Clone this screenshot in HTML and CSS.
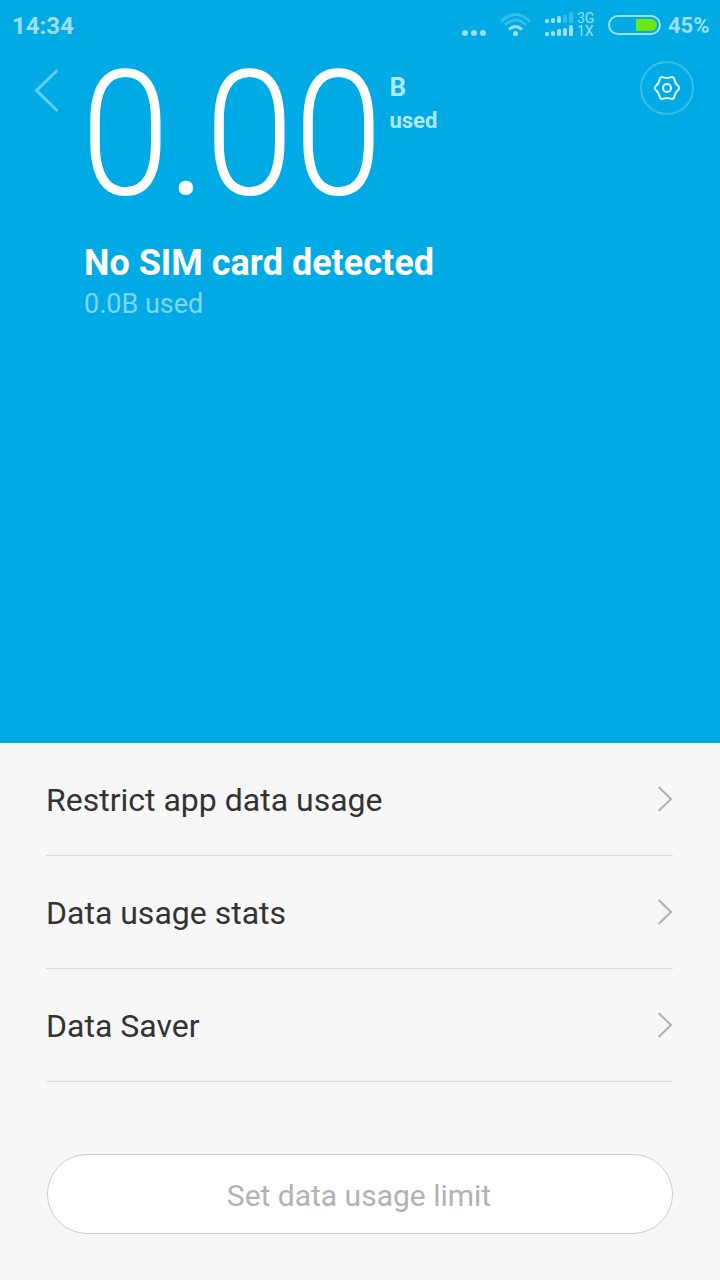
FILE: index.html
```html
<!DOCTYPE html>
<html lang="en">
<head>
<meta charset="utf-8">
<title>Data usage</title>
<link rel="stylesheet" href="styles.css">
</head>
<body>
<header class="hero">
  <div class="status">
    <span class="time">14:34</span>
    <svg class="status-icons" width="116" height="50" viewBox="461 0 116 50">
      <g fill="#9ddef5">
        <circle cx="465" cy="33" r="3"/><circle cx="474" cy="33" r="3"/><circle cx="483" cy="33" r="3"/>
        <circle cx="515.5" cy="33.5" r="2.5"/>
        <rect x="545" y="19" width="4" height="4" rx="1.5"/><rect x="551" y="18" width="4" height="5" rx="1.5"/><rect x="557" y="16" width="4" height="7" rx="1.5"/>
        <rect x="545" y="32" width="4" height="4" rx="1.5"/><rect x="551" y="31" width="4" height="5" rx="1.5"/><rect x="557" y="29" width="4" height="7" rx="1.5"/><rect x="563" y="28" width="4" height="8" rx="1.5"/><rect x="569" y="25" width="4" height="11" rx="1.5"/>
      </g>
      <g fill="#38bdea"><rect x="563" y="15" width="4" height="8" rx="1.5"/><rect x="569" y="12" width="4" height="11" rx="1.5"/></g>
      <g fill="none" stroke-width="3">
        <path d="M501 21.5Q515.500 7.500 530 21.500" stroke="#38bdea"/>
        <path d="M505 25Q515.500 15 526 25" stroke="#38bdea"/>
        <path d="M509 29.500Q515.500 23.500 522 29.500" stroke="#9ddef5"/>
      </g>
    </svg>
    <span class="net"><span>3G</span><span>1X</span></span>
    <span class="battery"><span class="charge"></span></span>
    <span class="percent">45%</span>
  </div>
  <div class="top">
    <svg class="back" width="26" height="44" viewBox="34 69 26 44"><path d="M56.500 71L36.500 90.500L56.500 110" fill="none" stroke="#66cdf0" stroke-width="3" stroke-linecap="round"/></svg>
    <div class="amount"><span class="digit">0</span><span class="dot">.</span><span class="digit">0</span><span class="digit">0</span></div>
    <div class="unit"><span class="unit-name">B</span><span class="unit-used">used</span></div>
    <div class="settings">
      <svg width="30" height="30" viewBox="-15 -15 30 30" fill="none" stroke="#e3f6fd" stroke-width="2"><path d="M10.880-2.330Q13.700 0 10.880 2.330Q8.050 4.650 7.450 8.260Q6.850 11.860 3.430 10.580Q0 9.300-3.430 10.580Q-6.850 11.860-7.450 8.260Q-8.050 4.650-10.880 2.330Q-13.700 0-10.880-2.330Q-8.050-4.650-7.450-8.260Q-6.850-11.860-3.430-10.580Q0-9.300 3.430-10.580Q6.850-11.860 7.450-8.260Q8.050-4.650 10.880-2.330Z"/><circle r="4"/></svg>
    </div>
  </div>
  <h1 class="title">No SIM card detected</h1>
  <p class="subtitle">0.0B used</p>
</header>
<main class="content">
  <div class="row"><span>Restrict app data usage</span><svg width="16" height="26" viewBox="0 0 16 26"><path d="M1.500 1L14 13L1.500 25" fill="none" stroke="#b0b0b0" stroke-width="2"/></svg></div>
  <div class="row"><span>Data usage stats</span><svg width="16" height="26" viewBox="0 0 16 26"><path d="M1.500 1L14 13L1.500 25" fill="none" stroke="#b0b0b0" stroke-width="2"/></svg></div>
  <div class="row"><span>Data Saver</span><svg width="16" height="26" viewBox="0 0 16 26"><path d="M1.500 1L14 13L1.500 25" fill="none" stroke="#b0b0b0" stroke-width="2"/></svg></div>
  <button class="limit">Set data usage limit</button>
</main>
</body>
</html>
```
FILE: styles.css
```css
* { box-sizing: border-box; }
body { margin: 0; width: 720px; height: 1280px; overflow: hidden; background: #f7f7f7; font-family: Roboto, "Liberation Sans", sans-serif; }
.hero { height: 743px; background: #00abe5; color: #fff; }
.status { display: flex; align-items: center; height: 50px; padding-left: 12px; color: #9ddef5; }
.time { width: 449px; font-size: 24px; font-weight: 700; line-height: 50px; padding-top: 2px; }
.status-icons { flex: none; }
.net { display: flex; flex-direction: column; width: 31px; font-size: 14px; line-height: 13px; padding-top: 0; }
.battery { display: flex; justify-content: flex-end; flex: none; width: 53px; height: 20px; padding: 2px; border: 2px solid #9ddef5; border-radius: 10px; }
.charge { width: 21px; height: 12px; background: #69e815; border-radius: 0 6px 6px 0; }
.percent { margin-left: 7px; font-size: 22px; font-weight: 700; line-height: 50px; padding-top: 2px; }
.top { display: flex; align-items: flex-start; height: 180px; padding-left: 34px; }
.back { flex: none; margin-top: 19px; }
.amount { display: flex; flex: none; width: 304px; margin: -5px 0 0 20.500px; font-size: 174px; font-weight: 300; line-height: 180px; }
.digit { display: flex; justify-content: center; width: 89px; transform: scaleX(.92); }
.dot { display: flex; justify-content: center; width: 35px; }
.unit { display: flex; flex-direction: column; width: 80px; margin: 20px 0 0 5px; color: #b3e6f7; font-weight: 700; }
.unit-name { font-size: 26px; line-height: 34px; }
.unit-used { font-size: 22px; line-height: 33px; }
.settings { display: flex; align-items: center; justify-content: center; width: 54px; height: 54px; margin: 11px 26px 0 auto; border: 2px solid #38bdea; border-radius: 50%; }
.title { margin: 12px 0 0 84px; font-size: 36px; font-weight: 700; line-height: 42px; }
.subtitle { margin: 4px 0 0 84px; font-size: 27px; line-height: 32px; color: #80d5f2; }
.content { padding: 0 47px 0 46px; }
.row { display: flex; align-items: center; justify-content: space-between; height: 113px; border-bottom: 1px solid #ddd; font-size: 32px; color: #333; }
.row span { padding-top: 2px; }
.row svg { flex: none; }
.limit { display: block; width: 626px; height: 80px; margin: 72px 0 0 1px; padding: 3px 2px 0 0; border: 1px solid #ccc; border-radius: 40px; background: #fff; color: #b2b2b2; font: 30px Roboto, "Liberation Sans", sans-serif; }
```
